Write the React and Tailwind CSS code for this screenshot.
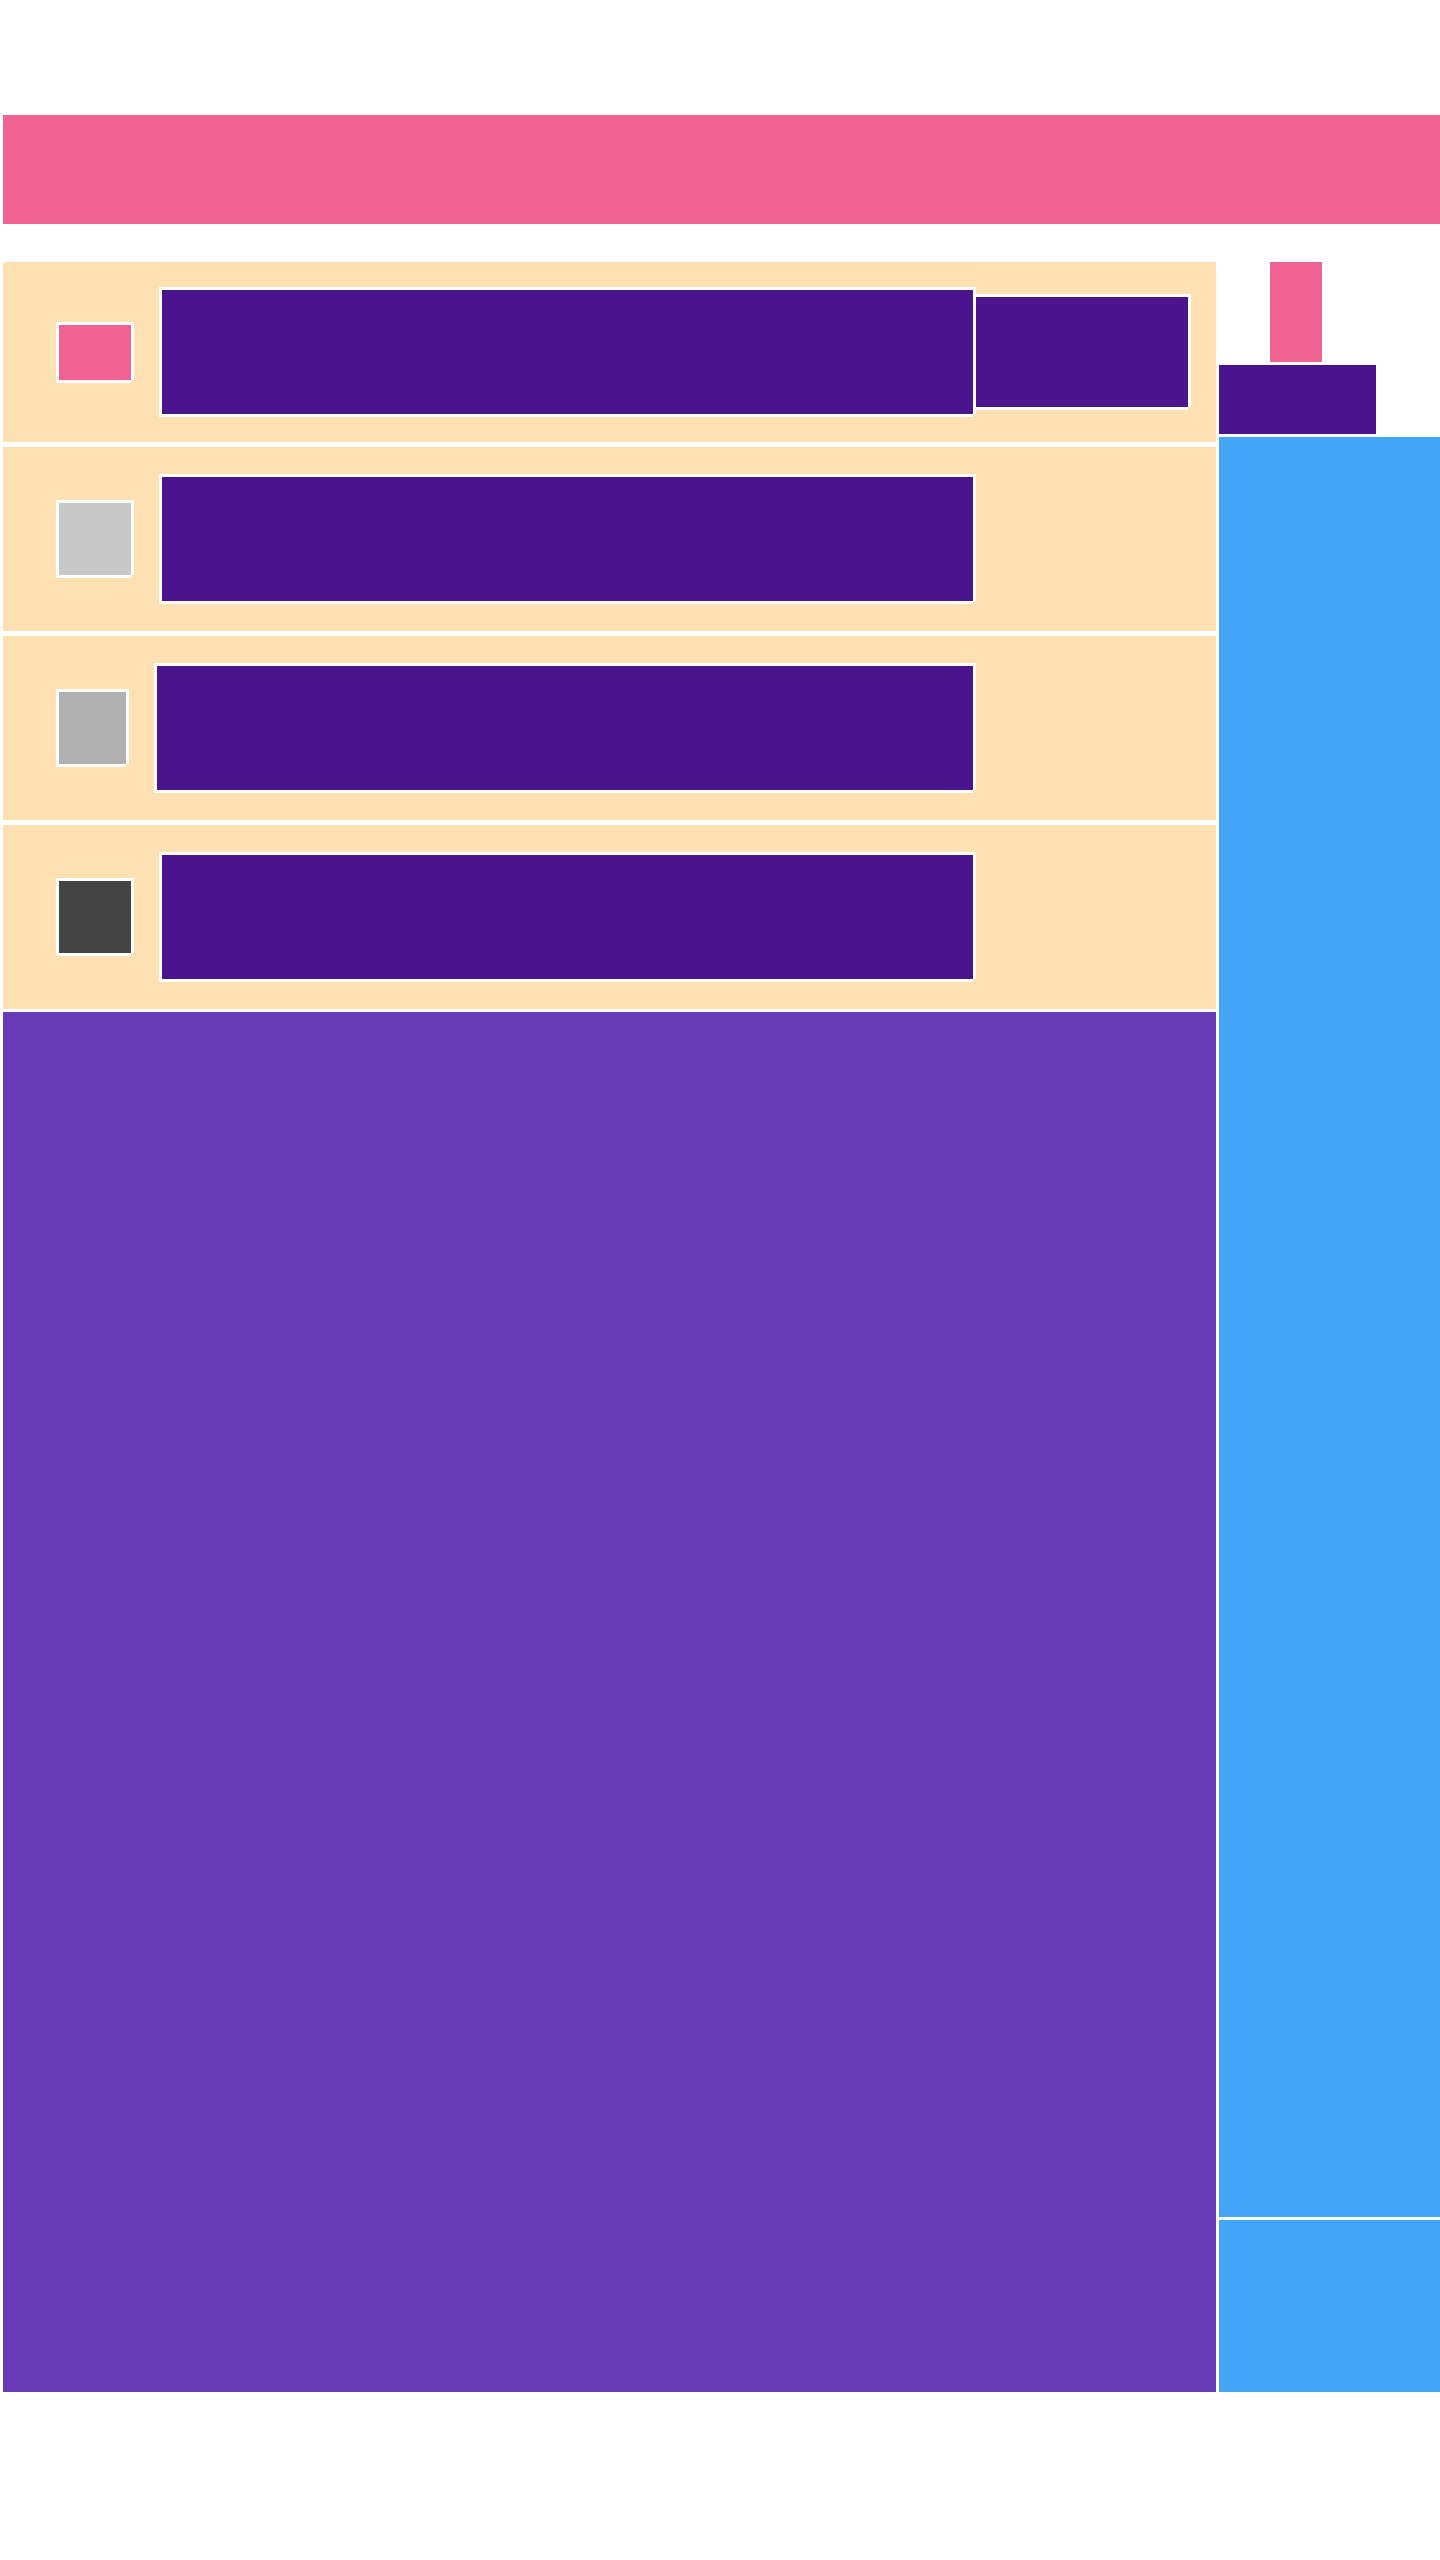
import React from 'react';

// white 3px frame drawn around a block, bottom-right corner left open
const frame =
  'shadow-[-3px_-3px_0_#fff,3px_-3px_0_#fff,-3px_3px_0_#fff,3px_0_0_#fff,0_3px_0_#fff]';

const rows = [
  { id: 'r1', h: 'h-[180px]', thumb: 'w-[72px] h-[55px] bg-[#f06292]', action: true },
  { id: 'r2', h: 'h-[184px] mt-[5px]', thumb: 'w-[72px] h-[72px] bg-[#c8c8c8]' },
  { id: 'r3', h: 'h-[184px] mt-[5px]', thumb: 'w-[67px] h-[72px] bg-[#b0b0b0]' },
  { id: 'r4', h: 'h-[184px] mt-[5px]', thumb: 'w-[72px] h-[72px] bg-[#444444]' },
];

function Row({ row }) {
  return (
    <div className={`${row.h} bg-[#ffe0b2] flex items-center pl-[56px]`}>
      <div className="w-[914px] flex items-center gap-[31px]">
        <div className={`${row.thumb} shrink-0 ${frame}`} />
        <div className={`flex-1 h-[124px] bg-[#4a148c] ${frame}`} />
      </div>
      {row.action && (
        <div className={`ml-[3px] w-[212px] h-[110px] bg-[#4a148c] ${frame}`} />
      )}
    </div>
  );
}

export default function App() {
  return (
    <div className="min-h-[2560px] bg-white pt-[115px]">
      {/* top banner */}
      <header className="ml-[3px] h-[109px] bg-[#f06292]" />

      <main className="mt-[38px] ml-[3px] flex gap-[3px]">
        {/* list column */}
        <section className="w-[1213px] flex flex-col">
          {rows.map((row) => (
            <Row key={row.id} row={row} />
          ))}
          <div className="mt-[3px] h-[1380px] bg-[#673ab7]" />
        </section>

        {/* side column */}
        <aside className="flex-1 flex flex-col">
          <div className="ml-[51px] w-[52px] h-[100px] bg-[#f06292]" />
          <div className="mt-[3px] w-[157px] h-[69px] bg-[#4a148c]" />
          <div className="mt-[3px] h-[1780px] bg-[#42a5f5]" />
          <div className="mt-[3px] h-[172px] bg-[#42a5f5]" />
        </aside>
      </main>
    </div>
  );
}
